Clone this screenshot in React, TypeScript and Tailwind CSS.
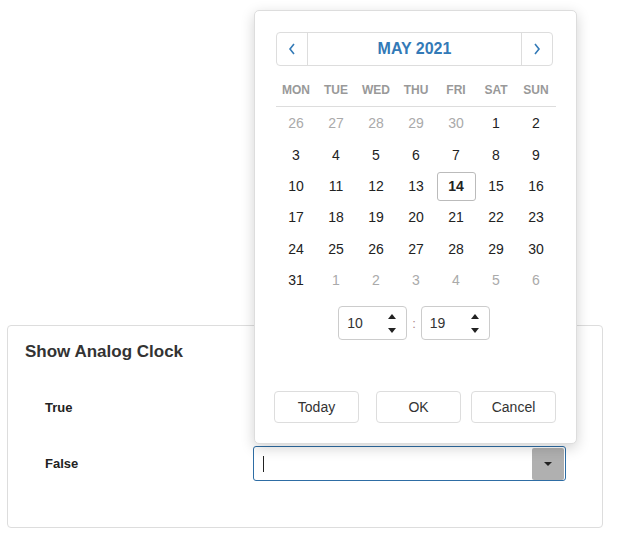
import React from "react";

const weeks: [number, boolean][][] = [
  [[26, true], [27, true], [28, true], [29, true], [30, true], [1, false], [2, false]],
  [[3, false], [4, false], [5, false], [6, false], [7, false], [8, false], [9, false]],
  [[10, false], [11, false], [12, false], [13, false], [14, false], [15, false], [16, false]],
  [[17, false], [18, false], [19, false], [20, false], [21, false], [22, false], [23, false]],
  [[24, false], [25, false], [26, false], [27, false], [28, false], [29, false], [30, false]],
  [[31, false], [1, true], [2, true], [3, true], [4, true], [5, true], [6, true]],
];

const days = ["MON", "TUE", "WED", "THU", "FRI", "SAT", "SUN"];

function Spinner({ value }: { value: string }) {
  return (
    <div className="w-[69px] h-[34px] border border-[#ccc] rounded-[4px] flex items-center pl-[8px] pr-[10px] justify-between">
      <span className="text-[14px] text-[#333]">{value}</span>
      <div className="flex flex-col items-center gap-[9px]">
        <div className="w-0 h-0 border-l-[4px] border-r-[4px] border-b-[5px] border-l-transparent border-r-transparent border-b-[#222]" />
        <div className="w-0 h-0 border-l-[4px] border-r-[4px] border-t-[5px] border-l-transparent border-r-transparent border-t-[#222]" />
      </div>
    </div>
  );
}

export default function App() {
  return (
    <div
      className="relative w-[617px] h-[537px] bg-white overflow-hidden"
      style={{ fontFamily: '"Liberation Sans", Arial, sans-serif' }}
    >
      <div className="pt-[325px] pl-[7px] pr-[14px]">
        <div className="h-[203px] border border-[#ddd] rounded-[4px] pt-[16px]">
          <div className="pl-[17px] text-[17px] font-bold text-[#333] leading-[20px]">Show Analog Clock</div>
          <div className="flex items-center h-[20px] mt-[36px] pl-[37px]">
            <span className="text-[13px] font-bold text-[#222]">True</span>
          </div>
          <div className="flex items-center mt-[28px]">
            <div className="w-[245px] pl-[37px] text-[13px] font-bold text-[#222]">False</div>
            <div className="w-[313px] h-[35px] border border-[#2e6da4] rounded-[3px] flex items-center justify-between pl-[9px] pr-[1px]">
              <div className="w-[1px] h-[16px] bg-[#222]" />
              <div className="w-[32px] h-[32px] bg-[#b0b0b0] rounded-[2px] flex items-center justify-center">
                <div className="w-0 h-0 border-l-[4px] border-r-[4px] border-t-[4px] border-l-transparent border-r-transparent border-t-[#222]" />
              </div>
            </div>
          </div>
        </div>
      </div>

      <div className="absolute left-[254px] top-[10px] w-[323px] h-[434px] bg-white border border-[#ddd] rounded-[5px] shadow-[0_4px_14px_rgba(0,0,0,0.18)] px-[21px] pt-[21px]">
        <div className="flex h-[34px] border border-[#ddd] rounded-[4px] w-[277px]">
          <div className="w-[31px] border-r border-[#ddd] flex items-center justify-center text-[#337ab7]">
            <svg width="10" height="14" viewBox="0 0 10 14"><path d="M7 2 L3 7 L7 12" fill="none" stroke="#337ab7" strokeWidth="1.6" /></svg>
          </div>
          <div className="flex-1 flex items-center justify-center text-[16px] font-bold text-[#337ab7]">MAY 2021</div>
          <div className="w-[31px] border-l border-[#ddd] flex items-center justify-center">
            <svg width="10" height="14" viewBox="0 0 10 14"><path d="M3 2 L7 7 L3 12" fill="none" stroke="#337ab7" strokeWidth="1.6" /></svg>
          </div>
        </div>
        <div className="w-[280px] grid grid-cols-7 h-[41px] items-center border-b border-[#ddd] pt-[7px]">
          {days.map((d) => (
            <div key={d} className="text-center text-[12px] font-bold text-[#999]">{d}</div>
          ))}
        </div>
        <div className="w-[280px] pt-[1px]">
          {weeks.map((w, i) => (
            <div key={i} className="grid grid-cols-7 h-[31.4px] items-center">
              {w.map(([n, muted], j) => {
                const sel = n === 14 && !muted;
                return (
                  <div key={j} className="flex justify-center">
                    <div
                      className={
                        sel
                          ? "w-[39px] h-[29px] border border-[#bbb] rounded-[3px] flex items-center justify-center text-[14px] font-bold text-[#222]"
                          : muted
                          ? "text-[14px] text-[#aaa]"
                          : "text-[14px] text-[#222]"
                      }
                    >
                      {n}
                    </div>
                  </div>
                );
              })}
            </div>
          ))}
        </div>
        <div className="flex justify-center items-center mt-[10px] w-[280px] gap-[5px] -ml-[2px]">
          <Spinner value="10" />
          <span className="text-[13px] text-[#a88]">:</span>
          <Spinner value="19" />
        </div>
        <div className="flex w-[283px] mt-[51px] -ml-[2px]">
          <button className="w-[85px] h-[32px] border border-[#ddd] rounded-[4px] text-[14px] text-[#333]">Today</button>
          <button className="ml-[17px] w-[85px] h-[32px] border border-[#ddd] rounded-[4px] text-[14px] text-[#333]">OK</button>
          <button className="ml-[10px] w-[85px] h-[32px] border border-[#ddd] rounded-[4px] text-[14px] text-[#333]">Cancel</button>
        </div>
      </div>
    </div>
  );
}
